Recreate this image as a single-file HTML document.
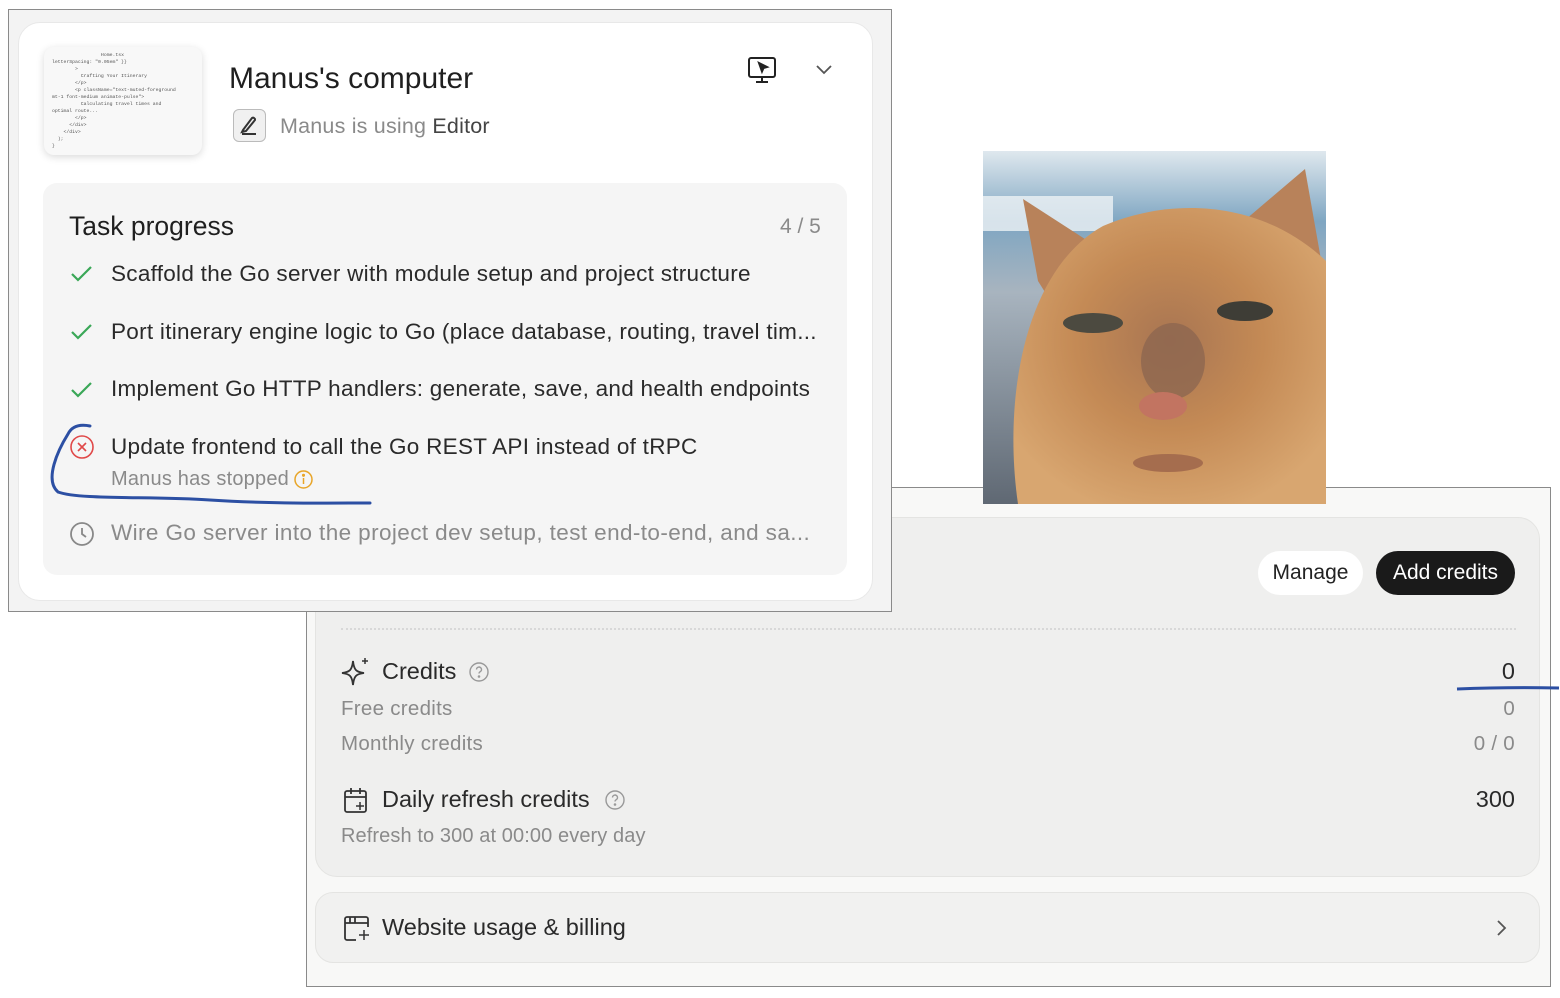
<!DOCTYPE html>
<html><head><style>
*{box-sizing:border-box;margin:0;padding:0}
body{width:1560px;height:998px;background:#fff;position:relative;overflow:hidden;font-family:"Liberation Sans",sans-serif;color:#222}
.abs{position:absolute}
.back{left:306px;top:487px;width:1245px;height:500px;background:#f8f8f7;border:1px solid #8a8a8a}
.card{left:315px;top:517px;width:1225px;height:360px;background:#efefee;border-radius:22px;border:1px solid #e4e4e2}
.web{left:315px;top:892px;width:1225px;height:71px;background:#f1f1f0;border-radius:18px;border:1px solid #e4e4e2}
.btn{border-radius:22px;height:44px;top:551px;font-size:21px;line-height:44px;text-align:center}
.front{left:8px;top:9px;width:884px;height:603px;background:#f3f3f3;border:1px solid #8a8a8a}
.white{left:18px;top:22px;width:855px;height:579px;background:#fff;border-radius:22px;border:1px solid #e8e8e8}
.task{left:43px;top:183px;width:804px;height:392px;background:#f5f5f5;border-radius:14px}
.t{font-size:22.5px;letter-spacing:.28px;color:#2a2a2a;white-space:nowrap}
.r{font-size:23.5px;letter-spacing:0}
.g{color:#8a8a8a}
</style></head><body>
<div class="abs back"></div>
<div class="abs card"></div>
<div class="abs btn" style="left:1258px;width:105px;background:#fff;color:#222">Manage</div>
<div class="abs btn" style="left:1376px;width:139px;background:#1a1a1a;color:#fff">Add credits</div>
<div class="abs" style="left:341px;top:628px;width:1175px;border-top:2px dotted #d8d8d8"></div>
<svg class="abs" style="left:340px;top:656px" width="32" height="32" viewBox="0 0 32 32" fill="none" stroke="#333" stroke-width="1.8"><path d="M13 5 C14 14 16 16 24 17 C16 18 14 20 13 29 C12 20 10 18 2 17 C10 16 12 14 13 5Z"/><path d="M25 2 v6 M22 5 h6" stroke-width="1.5"/></svg>
<div class="abs t r" style="left:382px;top:658px">Credits</div>
<svg class="abs" style="left:468px;top:661px" width="22" height="22" viewBox="0 0 22 22" fill="none" stroke="#999" stroke-width="1.4"><circle cx="11" cy="11" r="9"/><path d="M8.5 8.5a2.5 2.5 0 1 1 3.5 2.3c-.7.4-1 .8-1 1.7"/><circle cx="11" cy="15.5" r=".6" fill="#999"/></svg>
<div class="abs t r" style="right:45px;top:658px">0</div>
<div class="abs t g" style="left:341px;top:697px;font-size:20.5px">Free credits</div>
<div class="abs t g" style="right:45px;top:697px;font-size:20.5px">0</div>
<div class="abs t g" style="left:341px;top:732px;font-size:20.5px">Monthly credits</div>
<div class="abs t g" style="right:45px;top:732px;font-size:20.5px">0 / 0</div>
<svg class="abs" style="left:342px;top:786px" width="28" height="30" viewBox="0 0 28 30" fill="none" stroke="#333" stroke-width="1.8"><rect x="3" y="5" width="21" height="21" rx="2"/><path d="M3 11h21M9 2v6M18 2v6"/><path d="M18 16v8M14 20h8" stroke-width="1.5"/></svg>
<div class="abs t r" style="left:382px;top:786px">Daily refresh credits</div>
<svg class="abs" style="left:604px;top:789px" width="22" height="22" viewBox="0 0 22 22" fill="none" stroke="#999" stroke-width="1.4"><circle cx="11" cy="11" r="9"/><path d="M8.5 8.5a2.5 2.5 0 1 1 3.5 2.3c-.7.4-1 .8-1 1.7"/><circle cx="11" cy="15.5" r=".6" fill="#999"/></svg>
<div class="abs t r" style="right:45px;top:786px">300</div>
<div class="abs t g" style="left:341px;top:825px;font-size:20px;letter-spacing:.1px">Refresh to 300 at 00:00 every day</div>
<div class="abs web"></div>
<svg class="abs" style="left:342px;top:914px" width="30" height="30" viewBox="0 0 30 30" fill="none" stroke="#333" stroke-width="1.8"><path d="M14 26H5a2 2 0 0 1-2-2V5a2 2 0 0 1 2-2h19a2 2 0 0 1 2 2v8"/><path d="M3 9h23M8 3v6M13 3v6"/><path d="M22 16v10M17 21h10" stroke-width="1.5"/></svg>
<div class="abs t r" style="left:382px;top:914px">Website usage &amp; billing</div>
<svg class="abs" style="left:1494px;top:918px" width="14" height="20" viewBox="0 0 14 20" fill="none" stroke="#555" stroke-width="1.8"><path d="M4 3l7 7-7 7"/></svg>
<svg class="abs" style="left:1456px;top:683px" width="104" height="10"><path d="M1 6 Q50 4 103 5" stroke="#2c4fa3" stroke-width="3" fill="none"/></svg>

<svg class="abs" style="left:983px;top:151px" width="343" height="353" viewBox="0 0 343 353">
<defs><linearGradient id="sky" x1="0" y1="0" x2="0" y2="1"><stop offset="0" stop-color="#dfe8ee"/><stop offset=".2" stop-color="#7fa6c2"/><stop offset=".4" stop-color="#a8b4bf"/><stop offset="1" stop-color="#5f6873"/></linearGradient>
<radialGradient id="fur" cx=".5" cy=".45" r=".6"><stop offset="0" stop-color="#a87552"/><stop offset=".5" stop-color="#c48a55"/><stop offset="1" stop-color="#d8a670"/></radialGradient></defs>
<rect width="343" height="353" fill="url(#sky)"/>
<rect x="0" y="45" width="130" height="35" fill="#eef2f5" opacity=".8"/>
<path d="M40 48 L105 90 L80 170 L55 130Z" fill="#b8825a"/>
<path d="M322 18 L340 120 L255 75Z" fill="#b8825a"/>
<path d="M35 353 C20 250 40 120 120 75 C190 45 280 50 343 110 L343 353Z" fill="url(#fur)"/>
<ellipse cx="110" cy="172" rx="30" ry="10" fill="#4c4a40"/>
<ellipse cx="262" cy="160" rx="28" ry="10" fill="#3e3d36"/>
<ellipse cx="190" cy="210" rx="32" ry="38" fill="#8d6650" opacity=".8"/>
<ellipse cx="180" cy="255" rx="24" ry="14" fill="#c27461"/>
<ellipse cx="185" cy="312" rx="35" ry="9" fill="#a56d4e"/>
</svg>

<div class="abs front"></div>
<div class="abs white"></div>
<div class="abs" style="left:44px;top:47px;width:158px;height:108px;background:#f8f8f8;border-radius:10px;box-shadow:0 2px 8px rgba(0,0,0,.15);font-family:'Liberation Mono',monospace;font-size:4.8px;color:#555;padding:5px 8px;line-height:7px;white-space:pre">                 Home.tsx
letterSpacing: "0.05em" }}
        &gt;
          Crafting Your Itinerary
        &lt;/p&gt;
        &lt;p className="text-muted-foreground
mt-1 font-medium animate-pulse"&gt;
          Calculating travel times and
optimal route...
        &lt;/p&gt;
      &lt;/div&gt;
    &lt;/div&gt;
  );
}</div>
<div class="abs t" style="left:229px;top:62px;font-size:30px;letter-spacing:0;color:#1f1f1f">Manus's computer</div>
<div class="abs" style="left:233px;top:109px;width:33px;height:33px;border:1.5px solid #bbb;border-radius:6px;background:#f0f0f0"></div>
<svg class="abs" style="left:237px;top:113px" width="25" height="25" viewBox="0 0 25 25" fill="none" stroke="#333" stroke-width="2"><path d="M6 17 L15 5 a2 2 0 0 1 3 2 L9 18 L5 19Z"/><path d="M5 21h14"/></svg>
<div class="abs t g" style="left:280px;top:114px;font-size:21.5px;letter-spacing:.2px">Manus is using <span style="color:#444">Editor</span></div>
<svg class="abs" style="left:747px;top:56px" width="32" height="30" viewBox="0 0 32 30" fill="none" stroke="#222" stroke-width="2"><rect x="2" y="2" width="26" height="19" rx="2"/><path d="M15 21v5M9 26h12"/><path d="M12 7l8 4-3.5 1-1.5 3.5Z" fill="#222"/></svg>
<svg class="abs" style="left:815px;top:62px" width="18" height="14" viewBox="0 0 18 14" fill="none" stroke="#555" stroke-width="1.8"><path d="M2 4l7 7 7-7"/></svg>
<div class="abs task"></div>
<div class="abs t" style="left:69px;top:211px;font-size:26.5px;letter-spacing:0;color:#1f1f1f">Task progress</div>
<div class="abs t g" style="left:780px;top:215px;font-size:21px;letter-spacing:0">4 / 5</div>
<svg class="abs" style="left:70px;top:264px" width="24" height="20" viewBox="0 0 24 20" fill="none" stroke="#3aa757" stroke-width="2.2"><path d="M2 10l6 6L21 3"/></svg>
<div class="abs t" style="left:111px;top:261px">Scaffold the Go server with module setup and project structure</div>
<svg class="abs" style="left:70px;top:322px" width="24" height="20" viewBox="0 0 24 20" fill="none" stroke="#3aa757" stroke-width="2.2"><path d="M2 10l6 6L21 3"/></svg>
<div class="abs t" style="left:111px;top:319px">Port itinerary engine logic to Go (place database, routing, travel tim...</div>
<svg class="abs" style="left:70px;top:380px" width="24" height="20" viewBox="0 0 24 20" fill="none" stroke="#3aa757" stroke-width="2.2"><path d="M2 10l6 6L21 3"/></svg>
<div class="abs t" style="left:111px;top:376px">Implement Go HTTP handlers: generate, save, and health endpoints</div>
<svg class="abs" style="left:69px;top:434px" width="26" height="26" viewBox="0 0 26 26" fill="none" stroke="#e04848" stroke-width="1.6"><circle cx="13" cy="13" r="11"/><path d="M9 9l8 8M17 9l-8 8"/></svg>
<div class="abs t" style="left:111px;top:434px">Update frontend to call the Go REST API instead of tRPC</div>
<div class="abs t g" style="left:111px;top:468px;font-size:20px;letter-spacing:.2px">Manus has stopped</div>
<svg class="abs" style="left:293px;top:469px" width="21" height="21" viewBox="0 0 21 21" fill="none" stroke="#e8a528" stroke-width="1.5"><circle cx="10.5" cy="10.5" r="8.5"/><path d="M10.5 9v6"/><circle cx="10.5" cy="6.3" r=".8" fill="#e8a528"/></svg>
<svg class="abs" style="left:69px;top:521px" width="26" height="26" viewBox="0 0 26 26" fill="none" stroke="#888" stroke-width="1.8"><circle cx="13" cy="13" r="11"/><path d="M13 7v6l4 3"/></svg>
<div class="abs t g" style="left:111px;top:520px;letter-spacing:.4px">Wire Go server into the project dev setup, test end-to-end, and sa...</div>
<svg class="abs" style="left:40px;top:420px" width="340" height="90" fill="none" stroke="#2c4fa3" stroke-width="3" stroke-linecap="round"><path d="M50 6 C40 4 32 6 28 14 C18 30 4 60 18 72 C40 80 110 76 170 80 C230 84 290 83 330 83"/></svg>
</body></html>
